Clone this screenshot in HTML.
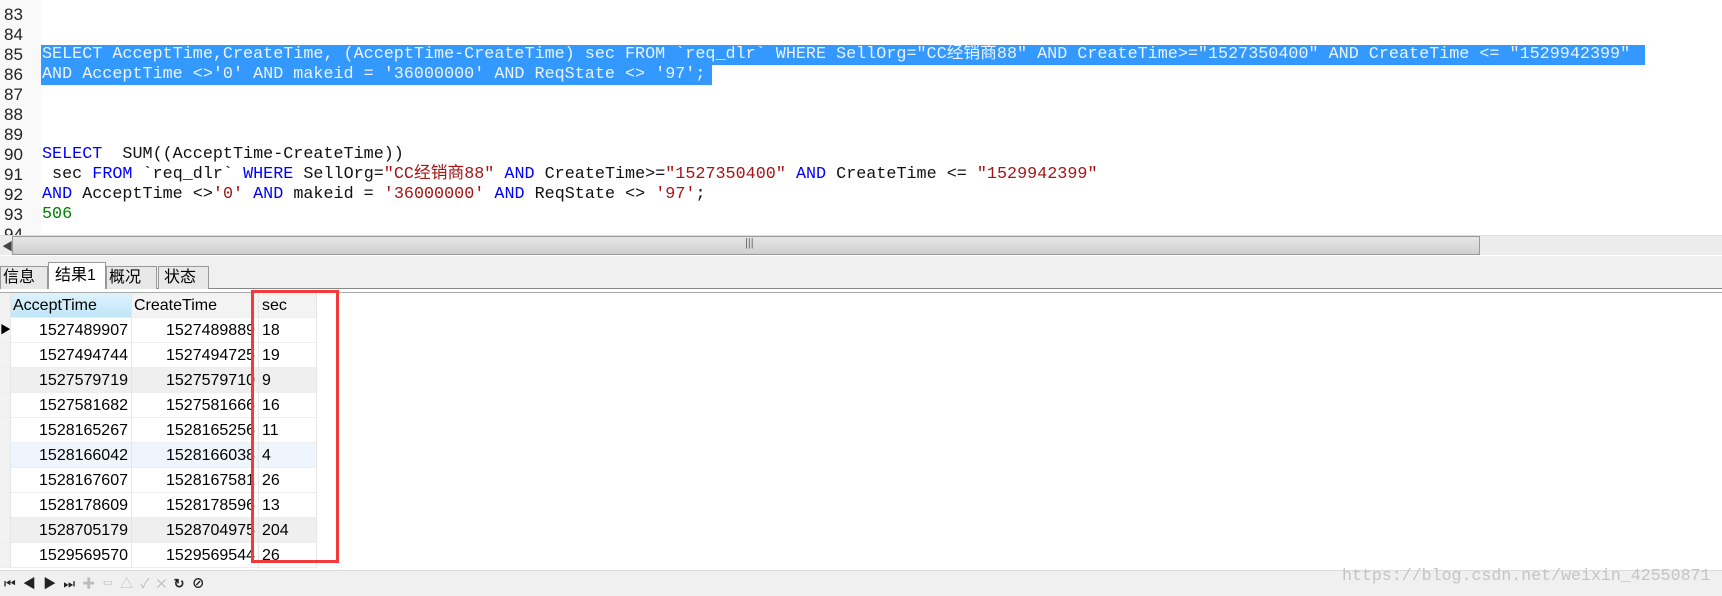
<!DOCTYPE html>
<html><head><meta charset="utf-8"><style>
*{margin:0;padding:0;box-sizing:border-box}
body{width:1722px;height:596px;overflow:hidden;background:#fff;position:relative;font-family:"Liberation Sans","Noto Sans CJK SC",sans-serif}
.gut{position:absolute;left:0;top:0;width:41px;height:235px;background:#f9f9f9}
.ln{position:absolute;left:4px;font:17px/20px "Liberation Sans Narrow","Liberation Sans",sans-serif;color:#222}
.code{position:absolute;left:42px;font:16.75px/20px "Liberation Mono","Noto Sans CJK SC",monospace;white-space:pre;color:#111}
.k{color:#0000ff}.s{color:#a31515}.n{color:#008000}
.hl{position:absolute;background:#3399ff}
.sel{color:#eaf2ff}
.scr{position:absolute;left:0;top:235px;width:1722px;height:20px;background:#ececec;border-top:1px solid #ddd}
.thumb{position:absolute;left:12px;top:236px;width:1468px;height:19px;background:linear-gradient(#e6e6e6,#cfcfcf);border:1px solid #999}
.tabs{position:absolute;left:0;top:256px;width:1722px;height:33px;background:#f0f0f0;border-bottom:1px solid #888}
.tab{position:absolute;top:266px;height:23px;font-size:16px;line-height:22px;padding-left:2px;background:#e8e8e8;border:1px solid #999;border-bottom:none}
.grid{position:absolute;left:0;top:292px;width:1722px;border-top:1px solid #aaa}
.cell{position:absolute;height:25px;font-size:16px;line-height:25px;border-right:1px solid #e6e6e6;border-bottom:1px solid #eee;white-space:nowrap;overflow:hidden}
.tb{position:absolute;top:570px;left:0;width:1722px;height:26px;background:#f0f0f0;border-top:1px solid #ddd}
</style></head><body>
<div class="gut"></div>
<div class="hl" style="left:41px;top:45px;width:1604px;height:20px"></div>
<div class="hl" style="left:41px;top:65px;width:671px;height:20px"></div>
<div class="ln" style="top:5px">83</div>
<div class="ln" style="top:25px">84</div>
<div class="ln" style="top:45px">85</div>
<div class="ln" style="top:65px">86</div>
<div class="ln" style="top:85px">87</div>
<div class="ln" style="top:105px">88</div>
<div class="ln" style="top:125px">89</div>
<div class="ln" style="top:145px">90</div>
<div class="ln" style="top:165px">91</div>
<div class="ln" style="top:185px">92</div>
<div class="ln" style="top:205px">93</div>
<div class="ln" style="top:225px;height:10px;overflow:hidden">94</div>
<div class="code sel" style="top:45px">SELECT AcceptTime,CreateTime, (AcceptTime-CreateTime) sec FROM `req_dlr` WHERE SellOrg="CC经销商88" AND CreateTime&gt;="1527350400" AND CreateTime &lt;= "1529942399"</div>
<div class="code sel" style="top:65px">AND AcceptTime &lt;&gt;'0' AND makeid = '36000000' AND ReqState &lt;&gt; '97';</div>
<div class="code" style="top:145px"><span class="k">SELECT</span>  SUM((AcceptTime-CreateTime))</div>
<div class="code" style="top:165px"> sec <span class="k">FROM</span> `req_dlr` <span class="k">WHERE</span> SellOrg=<span class="s">"CC经销商88"</span> <span class="k">AND</span> CreateTime&gt;=<span class="s">"1527350400"</span> <span class="k">AND</span> CreateTime &lt;= <span class="s">"1529942399"</span></div>
<div class="code" style="top:185px"><span class="k">AND</span> AcceptTime &lt;&gt;<span class="s">'0'</span> <span class="k">AND</span> makeid = <span class="s">'36000000'</span> <span class="k">AND</span> ReqState &lt;&gt; <span class="s">'97'</span>;</div>
<div class="code n" style="top:205px">506</div>
<div class="scr"></div>
<div class="thumb"><span style="position:absolute;left:732px;top:0;font-size:11px;color:#666">|||</span></div>
<div style="position:absolute;left:2px;top:238px;font-size:11px;color:#444">◀</div>
<div class="tabs"></div>
<div class="tab" style="left:0;width:48px">信息</div>
<div class="tab" style="left:48px;width:58px;top:262px;height:27px;background:#fff;line-height:26px;padding-left:6px">结果1</div>
<div class="tab" style="left:106px;width:51px">概况</div>
<div class="tab" style="left:158px;width:51px;padding-left:5px">状态</div>
<div class="grid"></div>
<div class="cell" style="left:0;top:293px;width:11px;background:#f2f2f2"></div>
<div class="cell" style="left:11px;top:293px;width:121px;background:linear-gradient(#dff2fd,#bfe6f8);padding-left:2px">AcceptTime</div>
<div class="cell" style="left:132px;top:293px;width:127px;background:#f3f3f3;padding-left:2px">CreateTime</div>
<div class="cell" style="left:259px;top:293px;width:58px;background:#f3f3f3;padding-left:3px">sec</div>
<div id="rows"></div>
<div style="position:absolute;left:251px;top:290px;width:88px;height:273px;border:3px solid #f23a3a"></div>
<div class="tb"></div>
<div style="position:absolute;top:573px;left:4px;font-size:13px;color:#222;letter-spacing:0;white-space:pre">⏮  ◀  ▶  ⏭  <span style="color:#bbb">✚  ▭  △  ✓  ✕</span>  <b>↻  ⊘</b></div>
<div style="position:absolute;left:1342px;top:566px;font:16.6px/20px 'Liberation Mono',monospace;color:#c4c4c4">https://blog.csdn.net/weixin_42550871</div>
<script>
var d=[["1527489907","1527489889","18"],["1527494744","1527494725","19"],["1527579719","1527579710","9"],["1527581682","1527581666","16"],["1528165267","1528165256","11"],["1528166042","1528166038","4"],["1528167607","1528167581","26"],["1528178609","1528178596","13"],["1528705179","1528704975","204"],["1529569570","1529569544","26"]];
var h="";d.forEach(function(r,i){var t=318+i*25;var bg=i==2||i==8?"#efefef":(i==5?"#eef5fd":"#fff");
h+='<div class="cell" style="left:0;top:'+t+'px;width:11px;background:#f2f2f2;font-size:11px;line-height:25px">'+(i==0?'▶':'')+'</div>';
h+='<div class="cell" style="left:11px;top:'+t+'px;width:121px;background:'+bg+';text-align:right;padding-right:3px">'+r[0]+'</div>';
h+='<div class="cell" style="left:132px;top:'+t+'px;width:127px;background:'+bg+';padding-left:34px">'+r[1]+'</div>';
h+='<div class="cell" style="left:259px;top:'+t+'px;width:58px;background:'+bg+';padding-left:3px">'+r[2]+'</div>';});
document.getElementById("rows").innerHTML=h;
</script>
</body></html>
